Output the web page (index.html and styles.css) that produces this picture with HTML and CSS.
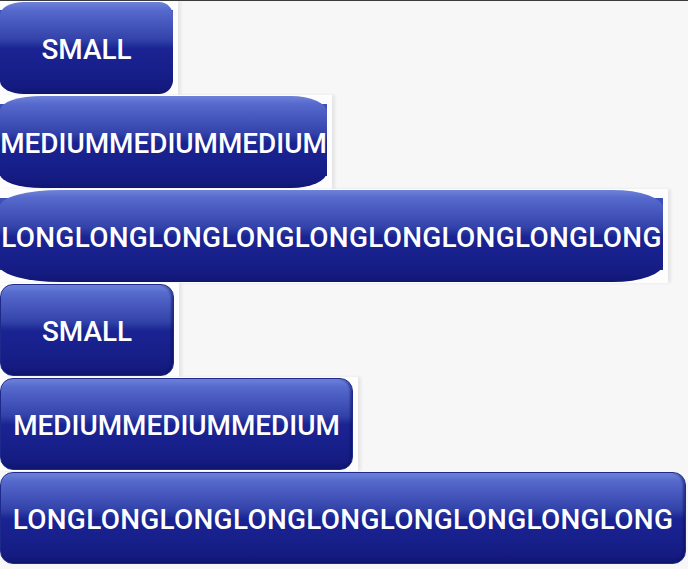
FILE: index.html
```html
<!DOCTYPE html>
<html>
<head>
<meta charset="utf-8">
<link rel="stylesheet" href="styles.css">
</head>
<body>
<div class="topline"></div>
<div class="list">
  <div class="row">
    <div class="cell w1">
      <div class="edge e-small"><div class="btn s-small">SMALL</div></div>
    </div>
  </div>
  <div class="row">
    <div class="cell w2">
      <div class="edge e-med"><div class="btn s-med">MEDIUMMEDIUMMEDIUM</div></div>
    </div>
  </div>
  <div class="row">
    <div class="cell w3">
      <div class="edge e-long"><div class="btn s-long long">LONGLONGLONGLONGLONGLONGLONGLONGLONG</div></div>
    </div>
  </div>
  <div class="row">
    <div class="cell w4">
      <div class="btn nine">SMALL</div>
    </div>
  </div>
  <div class="row">
    <div class="cell w5">
      <div class="btn nine">MEDIUMMEDIUMMEDIUM</div>
    </div>
  </div>
  <div class="row">
    <div class="cell w6">
      <div class="btn nine long">LONGLONGLONGLONGLONGLONGLONGLONGLONG</div>
    </div>
  </div>
</div>
</body>
</html>
```

FILE: styles.css
```css
html, body {
  margin: 0;
  padding: 0;
  background: #f7f7f7;
  width: 688px;
  height: 569px;
  overflow: hidden;
}

.topline {
  height: 1px;
  background: #3c3c3c;
}

.list {
  display: flex;
  flex-direction: column;
}

.row {
  height: 94px;
  display: flex;
}

.cell {
  background: #fdfdfd;
  padding: 1px 5px 1px 0;
  box-shadow: 3px 0 3px rgba(0, 0, 0, 0.07);
  display: flex;
}

.w1 .edge { width: 173px; }
.w2 .edge { width: 327px; }
.w3 .edge { width: 663px; }
.w4 .btn { width: 174px; }
.w5 .btn { width: 353px; }
.w6 { padding-right: 0; box-shadow: none; background: transparent; }
.w6 .btn { width: 686px; }

.btn {
  height: 92px;
  box-sizing: border-box;
  display: flex;
  align-items: center;
  justify-content: center;
  padding-top: 3px;
  font-family: Roboto, "Liberation Sans", sans-serif;
  font-size: 27.9px;
  font-weight: 500;
  color: #ffffff;
  white-space: nowrap;
  background: linear-gradient(to bottom,
    #6e82da 0%,
    #5669cc 9%,
    #4354ba 26%,
    #3242a9 41%,
    #25339c 46%,
    #1a2392 51%,
    #171f8a 75%,
    #141a7f 93%,
    #10166f 100%);
}

.long {
  letter-spacing: 0.3px;
}

.nine {
  border-radius: 13px;
  border: 1px solid #1d2a8c;
  box-shadow: inset -2px 0 2px rgba(10, 16, 90, 0.5), inset 0 1px 0 rgba(140, 160, 230, 0.6);
}

.edge {
  height: 92px;
  display: flex;
  background:
    linear-gradient(to bottom, #3e51b8, #2535a2 50%, #1d2a96) left 0 top 8px / 8px 72px no-repeat,
    linear-gradient(to bottom, #3e51b8, #2535a2 50%, #1a2490) right 0 top 8px / 12px 72px no-repeat;
}

.edge .btn {
  width: 100%;
}

.s-small {
  border-radius: 24px 14px 14px 24px / 13px 14px 14px 13px;
}

.s-med {
  border-radius: 42px 36px 36px 42px / 14px 16px 16px 14px;
}

.s-long {
  border-radius: 60px 50px 50px 60px / 16px 18px 18px 16px;
}
```
